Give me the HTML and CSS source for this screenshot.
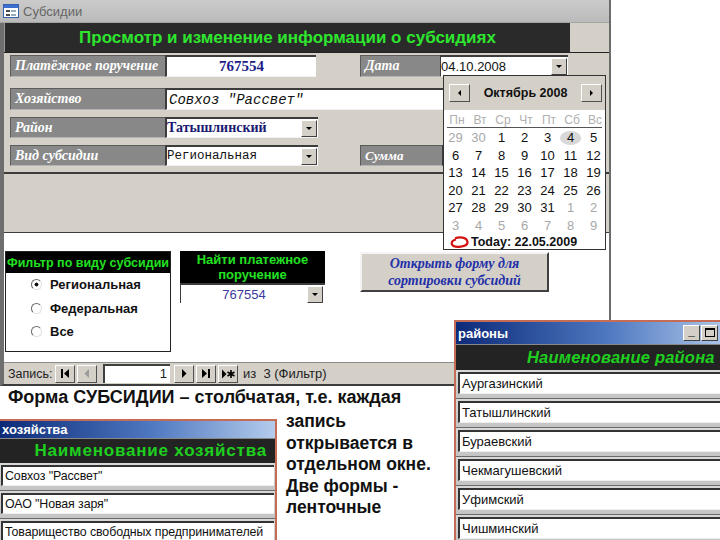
FILE: index.html
```html
<!DOCTYPE html>
<html lang="ru">
<head>
  <meta charset="UTF-8" />
  <title>Субсидии</title>
  <link rel="stylesheet" href="styles.css">
</head>
<body>
<div class="desk">

  <div class="win-main">
    <div class="titlebar">
      <svg width="16" height="14" viewBox="0 0 16 14">
        <rect x="0.5" y="0.5" width="15" height="13" fill="#fff" stroke="#3a5fae"/>
        <rect x="1" y="1" width="14" height="3" fill="#3a6fd0"/>
        <rect x="3" y="6" width="4" height="2" fill="#4a4a4a"/>
        <rect x="8" y="6" width="5" height="2" fill="#9ab"/>
        <rect x="3" y="10" width="4" height="2" fill="#4a4a4a"/>
        <rect x="8" y="10" width="5" height="2" fill="#9ab"/>
      </svg>
      <span>Субсидии</span>
    </div>

    <div class="frm">
      <div class="frm-head">
        <div class="band">Просмотр и изменение информации о субсидиях</div>
      </div>

      <div class="fields">
        <div class="row r1">
          <div class="lbl lbl-main">Платёжное поручение</div>
          <div class="fld fld-num">767554</div>
          <div class="lbl lbl-side">Дата</div>
          <div class="fld fld-date"><span>04.10.2008</span><span class="dd"></span></div>
        </div>
        <div class="row r2">
          <div class="lbl lbl-main">Хозяйство</div>
          <div class="fld fld-farm">Совхоз "Рассвет"</div>
        </div>
        <div class="row r3">
          <div class="lbl lbl-main">Район</div>
          <div class="fld fld-sel fld-dist"><span>Татышлинский</span><span class="dd"></span></div>
        </div>
        <div class="row r4">
          <div class="lbl lbl-main">Вид субсидии</div>
          <div class="fld fld-sel fld-kind"><span>Региональная</span><span class="dd"></span></div>
          <div class="lbl lbl-sum">Сумма</div>
          <div class="fld fld-sum"></div>
        </div>
      </div>

      <div class="gap"></div>

      <div class="foot">
        <div class="filter">
          <div class="filter-head">Фильтр по виду субсидии</div>
          <div class="opt"><span class="radio on"></span>Региональная</div>
          <div class="opt"><span class="radio"></span>Федеральная</div>
          <div class="opt"><span class="radio"></span>Все</div>
        </div>
        <div class="find">
          <div class="find-head">Найти платежное<br>поручение</div>
          <div class="combo"><span>767554</span><span class="dd"></span></div>
        </div>
        <div class="btn">Открыть форму для<br>сортировки субсидий</div>
      </div>

      <div class="nav">
        <span class="nav-lbl">Запись:</span>
        <span class="nb"><svg width="10" height="9" viewBox="0 0 10 9"><rect x="1" y="0" width="2" height="9"/><path d="M9 0 L4 4.5 L9 9 Z"/></svg></span>
        <span class="nb off"><svg width="10" height="9" viewBox="0 0 10 9"><path d="M7 0 L2.5 4.5 L7 9 Z"/></svg></span>
        <span class="nav-in">1</span>
        <span class="nb"><svg width="10" height="9" viewBox="0 0 10 9"><path d="M3 0 L7.5 4.5 L3 9 Z"/></svg></span>
        <span class="nb"><svg width="10" height="9" viewBox="0 0 10 9"><path d="M1 0 L6 4.5 L1 9 Z"/><rect x="7" y="0" width="2" height="9"/></svg></span>
        <span class="nb"><svg width="14" height="10" viewBox="0 0 14 10"><path d="M1 0.5 L5.5 5 L1 9.5 Z"/><path d="M10 1 V9 M6.5 3 L13.5 7 M13.5 3 L6.5 7" stroke="#000" stroke-width="1.6"/></svg></span>
        <span class="nav-of">из&nbsp; 3 (Фильтр)</span>
      </div>
    </div>

    <div class="calendar">
      <div class="cal-top">
        <span class="cb"><span class="tri-l"></span></span>
        <span class="cal-month">Октябрь 2008</span>
        <span class="cb"><span class="tri-r"></span></span>
      </div>
      <div class="cal-wd">
        <span>Пн</span><span>Вт</span><span>Ср</span><span>Чт</span><span>Пт</span><span>Сб</span><span>Вс</span>
      </div>
      <div class="cal-grid">
        <span class="o">29</span><span class="o">30</span><span>1</span><span>2</span><span>3</span><span class="sel">4</span><span>5</span>
        <span>6</span><span>7</span><span>8</span><span>9</span><span>10</span><span>11</span><span>12</span>
        <span>13</span><span>14</span><span>15</span><span>16</span><span>17</span><span>18</span><span>19</span>
        <span>20</span><span>21</span><span>22</span><span>23</span><span>24</span><span>25</span><span>26</span>
        <span>27</span><span>28</span><span>29</span><span>30</span><span>31</span><span class="o">1</span><span class="o">2</span>
        <span class="o">3</span><span class="o">4</span><span class="o">5</span><span class="o">6</span><span class="o">7</span><span class="o">8</span><span class="o">9</span>
      </div>
      <div class="cal-today">
        <svg width="19" height="13" viewBox="0 0 19 13"><path d="M5 2.5 C9 0.5 17 1 17.5 6 C18 11 4 12.5 2 8.5 C1 6 3 4 6 3.5" fill="none" stroke="#d41010" stroke-width="2.2"/></svg>
        <span>Today: 22.05.2009</span>
      </div>
    </div>
  </div>

  <div class="caption">
    <div class="cap-first">Форма СУБСИДИИ – столбчатая, т.е. каждая</div>
    <div class="cap-rest">запись<br>открывается в<br>отдельном окне.<br>Две формы -<br>ленточные</div>
  </div>

  <div class="win-list farms">
    <div class="wtitle">хозяйства</div>
    <div class="lhead">Наименование хозяйства</div>
    <div class="li"><div class="lf">Совхоз "Рассвет"</div></div>
    <div class="li"><div class="lf">ОАО "Новая заря"</div></div>
    <div class="li"><div class="lf">Товарищество свободных предпринимателей</div></div>
  </div>

  <div class="win-list districts">
    <div class="wtitle">
      <span>районы</span>
      <span class="wbtns"><span class="wb">_</span><span class="wb"><span class="maxi"></span></span></span>
    </div>
    <div class="lhead">Наименование района</div>
    <div class="li"><div class="lf">Аургазинский</div></div>
    <div class="li"><div class="lf">Татышлинский</div></div>
    <div class="li"><div class="lf">Бураевский</div></div>
    <div class="li"><div class="lf">Чекмагушевский</div></div>
    <div class="li"><div class="lf">Уфимский</div></div>
    <div class="li"><div class="lf">Чишминский</div></div>
  </div>

</div>
</body>
</html>
```

FILE: styles.css
```css
* {
  box-sizing: border-box;
}

body {
  margin: 0;
  background: #fff;
  font-family: "Liberation Sans", Arial, sans-serif;
}

.desk {
  position: relative;
  width: 720px;
  height: 540px;
  overflow: hidden;
}

/* main window */
.win-main {
  position: absolute;
  left: 0;
  top: 0;
  width: 611px;
  height: 386px;
  border-right: 2px solid #6c6c6c;
  display: flex;
  flex-direction: column;
  background: #d4d0c8;
}

.titlebar {
  height: 23px;
  flex: none;
  display: flex;
  align-items: center;
  gap: 4px;
  padding-left: 3px;
  background: linear-gradient(#cbcbcb, #bababa);
  border-bottom: 1px solid #a4a4a4;
  color: #666;
  font-size: 13px;
}

.frm {
  flex: 1;
  display: flex;
  flex-direction: column;
  border-left: 4px solid #6e6e6e;
  border-bottom: 2px solid #3c3c3c;
}

.frm-head {
  height: 30px;
  display: flex;
  border-bottom: 1px solid #222;
}

.band {
  width: 566px;
  background: #2a2a2a;
  color: #2ee62e;
  font-weight: bold;
  font-size: 17px;
  display: flex;
  align-items: center;
  justify-content: center;
  border-left: 1px solid #999;
}

.fields {
  height: 119px;
  padding: 2px 0 6px 6px;
  display: flex;
  flex-direction: column;
}

.row {
  display: flex;
  height: 22px;
}
.r2 { margin-top: 11px; }
.r3 { margin-top: 7px; height: 21px; }
.r4 { margin-top: 7px; height: 21px; }

.lbl {
  background: #888;
  color: #fff;
  font: italic bold 14px "Liberation Serif", serif;
  padding-left: 4px;
  display: flex;
  align-items: center;
  border-top: 1px solid #5c5c5c;
  border-left: 1px solid #5c5c5c;
  border-bottom: 1px solid #b4b4b4;
}
.lbl-main { width: 155px; }
.lbl-side { width: 80px; margin-left: 44px; }
.lbl-sum { width: 82px; margin-left: 42px; font-size: 13px; }

.fld {
  background: #fff;
  border-top: 2px solid #3c3c3c;
  border-left: 2px solid #3c3c3c;
  border-bottom: 1px solid #f0f0f0;
  display: flex;
  align-items: center;
}
.fld-num {
  width: 151px;
  justify-content: center;
  font: bold 15px "Liberation Serif", serif;
  color: #1c1c88;
}
.fld-date {
  width: 128px;
  justify-content: space-between;
  padding-right: 1px;
  font-size: 13px;
  color: #111;
  border-left-width: 1px;
}
.fld-farm {
  width: 290px;
  padding-left: 2px;
  font: italic 14px "Liberation Mono", monospace;
  color: #111;
}
.fld-sel {
  width: 153px;
  justify-content: space-between;
  padding-right: 1px;
}
.fld-dist {
  font: bold 14px "Liberation Serif", serif;
  color: #1a1a70;
}
.fld-kind {
  font: 12.5px "Liberation Mono", monospace;
  color: #111;
}
.fld-sum { width: 40px; }

.dd {
  width: 16px;
  height: 17px;
  flex: none;
  background: #d4d0c8;
  border: 1px solid;
  border-color: #fff #404040 #404040 #fff;
  display: flex;
  align-items: center;
  justify-content: center;
}
.dd::after {
  content: "";
  border-left: 3px solid transparent;
  border-right: 3px solid transparent;
  border-top: 3px solid #000;
}

.gap {
  height: 61px;
  border-top: 2px solid #3c3c3c;
  border-bottom: 1px solid #3c3c3c;
}

.foot {
  height: 129px;
  background: #fff;
  padding: 18px 0 0 1px;
  display: flex;
  align-items: flex-start;
}

.filter {
  width: 166px;
  height: 101px;
  border: 1px solid #222;
}
.filter-head {
  height: 21px;
  background: #000;
  color: #22e022;
  font-weight: bold;
  font-size: 12.5px;
  display: flex;
  align-items: center;
  justify-content: center;
  white-space: nowrap;
}
.opt {
  height: 23.5px;
  display: flex;
  align-items: center;
  gap: 8px;
  padding-left: 25px;
  font-weight: bold;
  font-size: 13px;
  color: #111;
}
.radio {
  width: 11px;
  height: 11px;
  border-radius: 50%;
  background: #fff;
  border: 1px solid;
  border-color: #6a6a6a #e0e0e0 #e0e0e0 #6a6a6a;
}
.radio.on {
  background: radial-gradient(circle, #111 0 1.8px, #fff 2.2px);
}

.find {
  width: 145px;
  margin-left: 9px;
}
.find-head {
  height: 32px;
  background: #000;
  color: #22e022;
  font-weight: bold;
  font-size: 13px;
  line-height: 15px;
  text-align: center;
  padding-top: 1px;
}
.combo {
  height: 20px;
  background: #fff;
  border-top: 2px solid #3c3c3c;
  border-left: 1px solid #3c3c3c;
  display: flex;
  align-items: center;
  justify-content: space-between;
  padding-right: 2px;
  color: #3a3a9c;
  font-size: 13px;
}
.combo span:first-child {
  flex: 1;
  text-align: center;
}

.btn {
  width: 189px;
  height: 40px;
  margin-left: 35px;
  margin-top: 1px;
  background: #d4d0c8;
  border: 2px solid;
  border-color: #f4f4f4 #404040 #404040 #f4f4f4;
  color: #2430a8;
  font: italic bold 14px "Liberation Serif", serif;
  line-height: 17px;
  display: flex;
  align-items: center;
  justify-content: center;
  text-align: center;
}

.nav {
  height: 22px;
  border-top: 1px solid #8a8a8a;
  display: flex;
  align-items: center;
  font-size: 12.5px;
  color: #222;
}
.nav-lbl { padding-left: 4px; width: 51px; }
.nb {
  width: 20px;
  height: 18px;
  margin-right: 2px;
  background: #d4d0c8;
  border: 1px solid;
  border-color: #fff #505050 #505050 #fff;
  display: flex;
  align-items: center;
  justify-content: center;
}
.nb svg { fill: #000; }
.nb.off svg { fill: #9a9a9a; }
.nav-in {
  width: 67px;
  height: 19px;
  margin: 0 4px 0 4px;
  background: #fff;
  border-top: 2px solid #404040;
  border-left: 2px solid #404040;
  text-align: right;
  padding-right: 3px;
  font-size: 13px;
  line-height: 16px;
}
.nav-of { padding-left: 3px; font-size: 13px; }

/* date picker popup */
.calendar {
  position: absolute;
  left: 443px;
  top: 75px;
  width: 163px;
  height: 175px;
  background: #fff;
  border: 1px solid #333;
  font-size: 13px;
}
.cal-top {
  height: 34px;
  background: #d4d0c8;
  display: flex;
  align-items: center;
  justify-content: space-between;
  padding: 0 3px 0 5px;
}
.cb {
  width: 21px;
  height: 18px;
  background: #d4d0c8;
  border: 1px solid;
  border-color: #fff #505050 #505050 #fff;
  display: flex;
  align-items: center;
  justify-content: center;
}
.tri-l {
  border-top: 3px solid transparent;
  border-bottom: 3px solid transparent;
  border-right: 3px solid #000;
}
.tri-r {
  border-top: 3px solid transparent;
  border-bottom: 3px solid transparent;
  border-left: 3px solid #000;
}
.cal-month {
  font-weight: bold;
  font-size: 12.5px;
  color: #111;
}
.cal-wd {
  display: grid;
  grid-template-columns: repeat(7, 23px);
  height: 18px;
  margin: 0 3px 0 3px;
  padding-top: 3px;
  border-bottom: 1px solid #555;
  color: #b0b0b0;
  font-size: 12px;
  text-align: center;
  line-height: 14px;
}
.cal-wd span { margin-left: -3px; }
.cal-grid {
  display: grid;
  grid-template-columns: repeat(7, 23px);
  grid-auto-rows: 17.5px;
  padding-top: 1px;
  color: #111;
}
.cal-grid span {
  display: flex;
  align-items: center;
  justify-content: center;
}
.cal-grid .o { color: #a8a8a8; }
.cal-grid .sel {
  background: #d8d8d8;
  border-radius: 50%;
  margin: 2px 1px;
}
.cal-today {
  display: flex;
  align-items: center;
  gap: 2px;
  padding: 1px 0 0 6px;
  font-weight: bold;
  font-size: 12.5px;
  color: #111;
}

/* slide caption */
.caption {
  position: absolute;
  left: 8px;
  top: 387px;
  font-weight: bold;
  font-size: 18px;
  line-height: 21px;
  color: #111;
}
.cap-rest {
  margin: 3px 0 0 278px;
  line-height: 21.5px;
  font-size: 17.5px;
}

/* continuous (list) forms */
.win-list {
  position: absolute;
  background: #cfcfcf;
  border: 2px solid #c46c56;
  overflow: hidden;
}
.farms {
  left: -2px;
  top: 419px;
  width: 279px;
  height: 130px;
}
.districts {
  left: 454px;
  top: 320px;
  width: 280px;
  height: 230px;
}

.wtitle {
  height: 17px;
  background: linear-gradient(90deg, #0c2a78, #4e78c0 55%, #b4cbec);
  color: #fff;
  font-weight: bold;
  font-size: 13px;
  display: flex;
  align-items: center;
  justify-content: space-between;
  padding-left: 2px;
}
.districts .wtitle { height: 22px; }

.wbtns {
  display: flex;
  gap: 1px;
  padding-right: 14px;
}
.wb {
  width: 17px;
  height: 16px;
  background: #d4d0c8;
  border: 1px solid;
  border-color: #fff #404040 #404040 #fff;
  color: #000;
  font-size: 12px;
  line-height: 10px;
  display: flex;
  justify-content: center;
  align-items: flex-start;
}
.maxi {
  width: 10px;
  height: 9px;
  margin-top: 2px;
  border: 1px solid #000;
  border-top-width: 2px;
}

.lhead {
  height: 25px;
  background: #232323;
  border-top: 1px solid #888;
  color: #1fcf1f;
  font: bold 17px "Liberation Sans", sans-serif;
  display: flex;
  align-items: center;
  justify-content: flex-end;
  padding-right: 8px;
  white-space: nowrap;
}
.districts .lhead {
  height: 26px;
  justify-content: flex-start;
  padding-left: 71px;
  font-size: 16.5px;
  font-style: italic;
  letter-spacing: 0.2px;
}
.farms .lhead { letter-spacing: 0.8px; }

.li {
  height: 28px;
  padding: 2px 1px 4px 1px;
  border-bottom: 1px solid #6a6a6a;
  background: linear-gradient(#d8d8d8, #c4c4c4);
}
.districts .li { height: 29px; padding-left: 2px; }

.lf {
  height: 100%;
  background: #fff;
  border-top: 2px solid #333;
  border-left: 2px solid #333;
  border-bottom: 1px solid #eee;
  display: flex;
  align-items: center;
  padding-left: 2px;
  font-size: 13px;
  color: #111;
  white-space: nowrap;
}
.farms .lf { font-size: 12.4px; letter-spacing: -0.1px; }
```
